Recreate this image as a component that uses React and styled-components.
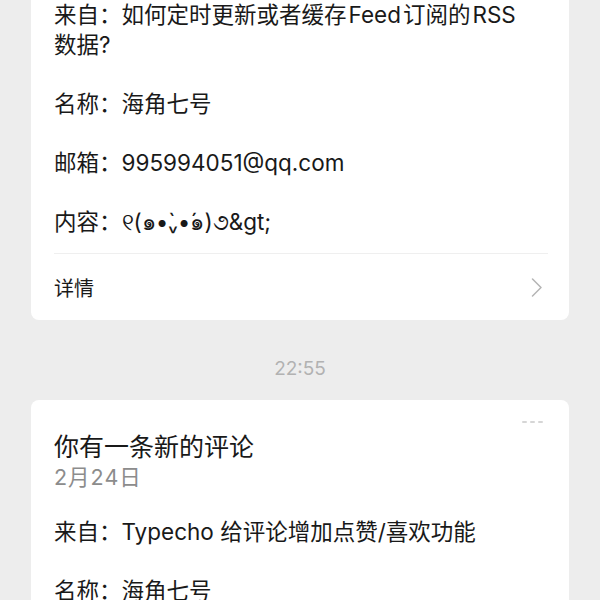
import React from "react";
import styled, { createGlobalStyle } from "styled-components";

const Global = createGlobalStyle`
  html, body { margin: 0; padding: 0; background: #ededed; overflow: hidden; }
  body { font-family: "Inter", "Noto Sans CJK SC", "Noto Sans", sans-serif; color: #191919; }
  * { box-sizing: border-box; }
`;

const Feed = styled.div`
  display: flex;
  flex-direction: column;
  padding: 0 31px 40px;
  margin-top: -117px;
`;

const Card = styled.div`
  position: relative;
  background: #fff;
  border-radius: 8px;
  padding: 31px 23px 0;
  display: flex;
  flex-direction: column;
`;

const More = styled.div`
  position: absolute;
  top: 21px;
  right: 26px;
  display: flex;
  gap: 3px;
  span {
    width: 5px;
    height: 2px;
    background: #d6d6d6;
    border-radius: 1px;
  }
`;

const Title = styled.div`
  font-size: 25px;
  line-height: 32px;
  color: #191919;
`;

const DateText = styled.div`
  font-size: 21.5px;
  line-height: 28px;
  letter-spacing: 1px;
  color: #8c8c8c;
`;

const Body = styled.div`
  display: flex;
  flex-direction: column;
  gap: 29px;
  margin-top: 26px;
  padding-bottom: 16px;
`;

const Row = styled.div`
  font-size: 22.5px;
  line-height: 30px;
  color: #191919;
  padding-right: 24px;
`;

const Latin = styled.span`
  margin: 0 2px;
`;

const Divider = styled.div`
  height: 1px;
  background: #efefef;
  margin-right: -2px;
`;

const Detail = styled.div`
  height: 66px;
  display: flex;
  align-items: center;
  justify-content: space-between;
  font-size: 20px;
  color: #191919;
  padding-right: 3px;
`;

const Time = styled.div`
  text-align: center;
  font-size: 19px;
  line-height: 24px;
  color: #b2b2b2;
  padding: 37px 0 19px;
`;

const Chevron = () => (
  <svg width="12" height="19" viewBox="0 0 12 19" fill="none">
    <path d="M1.5 1 L10 9.5 L1.5 18" stroke="#b5b5b5" strokeWidth="1.5" strokeLinecap="round" strokeLinejoin="round" />
  </svg>
);

const MessageCard = ({ title, date, rows, detail }) => (
  <Card>
    <More><span /><span /><span /></More>
    <Title>{title}</Title>
    <DateText>{date}</DateText>
    <Body>
      {rows.map((r, i) => (
        <Row key={i}>{r}</Row>
      ))}
    </Body>
    {detail && (
      <>
        <Divider />
        <Detail>
          <span>详情</span>
          <Chevron />
        </Detail>
      </>
    )}
  </Card>
);

export default function App() {
  return (
    <>
      <Global />
      <Feed>
        <MessageCard
          title="你有一条新的评论"
          date="2月24日"
          rows={[
            <>来自：如何定时更新或者缓存<Latin>Feed</Latin>订阅的<Latin>RSS</Latin>数据?</>,
            "名称：海角七号",
            "邮箱：995994051@qq.com",
            "内容：୧(๑•̀ᵥ•́๑)૭&gt;",
          ]}
          detail
        />
        <Time>22:55</Time>
        <MessageCard
          title="你有一条新的评论"
          date="2月24日"
          rows={[
            "来自：Typecho 给评论增加点赞/喜欢功能",
            "名称：海角七号",
            "邮箱：995994051@qq.com",
            "内容：赞一个",
          ]}
          detail
        />
      </Feed>
    </>
  );
}
